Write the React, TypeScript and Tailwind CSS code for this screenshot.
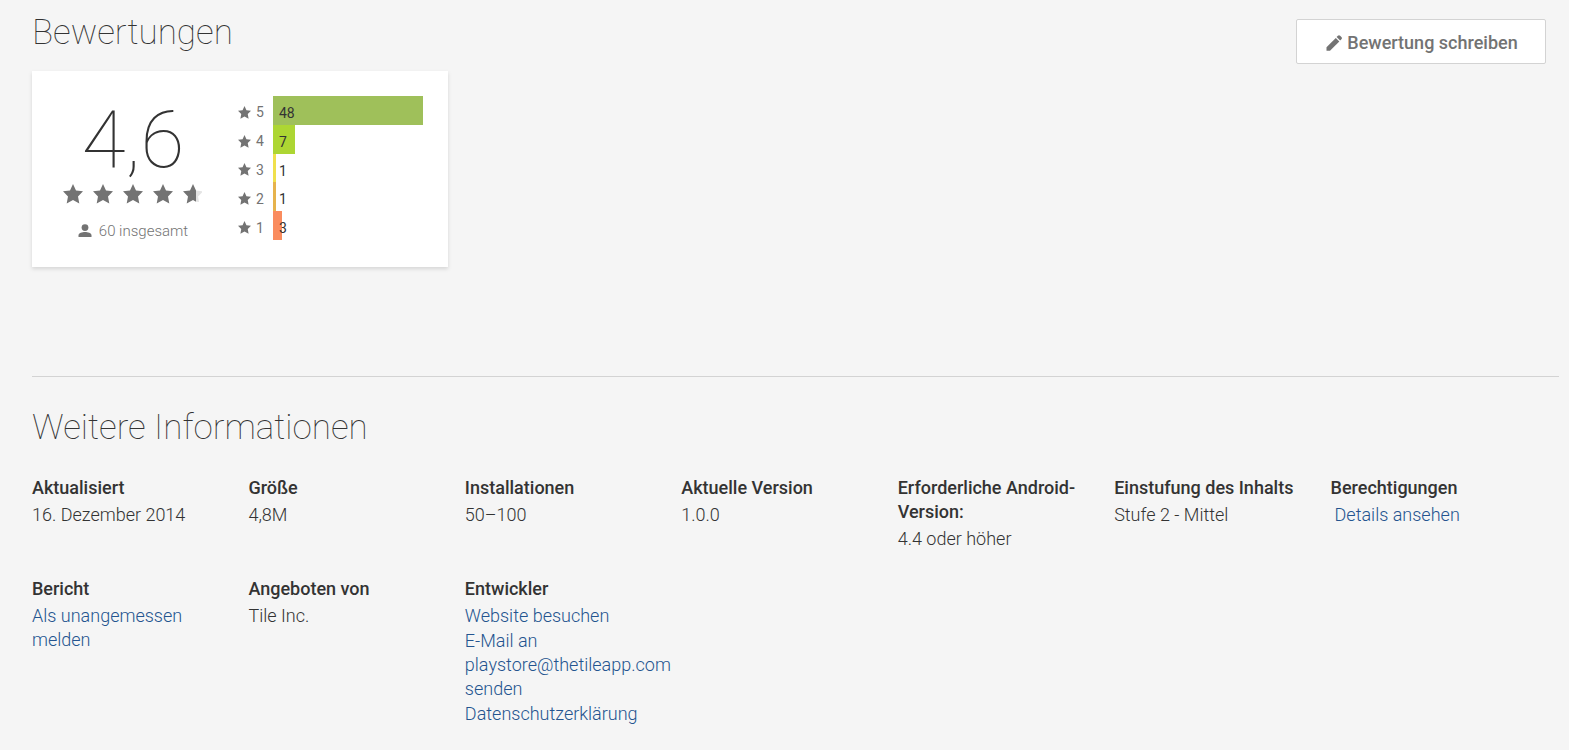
import React from "react";

const STAR_PATH =
  "M10 0L13 6.4 20 7.3 15 12.4 16.3 19.6 10 16.1 3.7 19.6 5 12.4 0 7.3 7 6.4z";

const ratings = [
  { stars: 5, count: 48, color: "bg-[#9fc05a]" },
  { stars: 4, count: 7, color: "bg-[#add633]" },
  { stars: 3, count: 1, color: "bg-[#f0e04d]" },
  { stars: 2, count: 1, color: "bg-[#e6b34d]" },
  { stars: 1, count: 3, color: "bg-[#fa8c5e]" },
];

const MAX_COUNT = 48;

const Star = ({ className }: { className: string }) => (
  <svg viewBox="0 0 20 20" className={className} fill="currentColor" aria-hidden="true">
    <path d={STAR_PATH} />
  </svg>
);

// Last star of the row, cut off on the right
const PartialStar = () => (
  <svg viewBox="0 0 20 20" className="h-5 w-5" aria-hidden="true">
    <path d="M13 6.4L19 7.2V8.4L15 12.4 16 18 13 17.8z" fill="#e4e4e4" />
    <path d="M10 0L13 6.4V17.8L10 16.1 3.7 19.6 5 12.4 0 7.3 7 6.4z" fill="#737373" />
  </svg>
);

const Score = () => (
  <div className="flex w-[152px] flex-col items-center pt-1">
    <div className="text-[80px] leading-[80px] font-thin text-[#333]">4,6</div>
    <div className="mt-1 flex gap-[10px] text-[#737373]">
      <Star className="h-5 w-5" />
      <Star className="h-5 w-5" />
      <Star className="h-5 w-5" />
      <Star className="h-5 w-5" />
      <PartialStar />
    </div>
    <div className="mt-[17px] flex items-center gap-[7px] text-[15px] leading-5 font-light text-[#737373]">
      <svg viewBox="0 0 14 14" className="h-[14px] w-[14px]" fill="currentColor" aria-hidden="true">
        <circle cx="7" cy="3.6" r="3.4" />
        <path d="M7 8c2.8 0 6.5 1 6.5 3.4V13H.5v-1.6C.5 9 4.2 8 7 8z" />
      </svg>
      60 insgesamt
    </div>
  </div>
);

const Histogram = () => (
  <div className="flex h-36 flex-1 flex-col">
    {ratings.map((r) => (
      <div key={r.stars} className="flex flex-1 text-sm">
        <div className="flex w-[35px] items-center gap-[5px] pt-1 text-[#737373]">
          <Star className="h-[13px] w-[13px]" />
          {r.stars}
        </div>
        <div className="relative flex-1">
          <div
            className={`h-full ${r.color}`}
            style={{ width: `${(r.count / MAX_COUNT) * 100}%` }}
          />
          <span className="absolute top-[7px] left-[6px] text-[#333]">{r.count}</span>
        </div>
      </div>
    ))}
  </div>
);

const InfoItem = ({ title, children }: { title: string; children: React.ReactNode }) => (
  <div className="pr-3">
    <h3 className="font-medium">{title}</h3>
    <div className="mt-[3px] flex flex-col items-start gap-px font-light">{children}</div>
  </div>
);

const InfoLink = ({ children }: { children: React.ReactNode }) => (
  <a href="#" className="text-[#24548f]">
    {children}
  </a>
);

const App = () => {
  return (
    <main className="min-h-screen bg-[#f5f5f5] pl-8 font-['Roboto',sans-serif] text-[#333]">
      {/* Reviews */}
      <section className="pt-[13px] pr-[23px]">
        <div className="flex items-start justify-between">
          <h2 className="text-[35px] leading-10 font-thin">Bewertungen</h2>
          <button className="mt-[6px] flex h-[45px] w-[250px] items-center justify-center gap-[5px] rounded-xs border border-[#d3d3d3] bg-white pt-[2px] pl-[2px] text-lg font-medium text-[#737373]">
            <svg viewBox="0 0 16 16" className="h-4 w-4" fill="currentColor" aria-hidden="true">
              <path d="M.5 12.200L9.800 2.900l3.500 3.500-9.300 9.300H.5z" />
              <path d="M10.600 2.100l1.300-1.300a1.600 1.600 0 0 1 2.200 0l1.300 1.300a1.600 1.600 0 0 1 0 2.200l-1.300 1.300z" />
            </svg>
            Bewertung schreiben
          </button>
        </div>
        <div className="mt-[7px] flex h-[196px] w-[416px] gap-[29px] bg-white px-[25px] pt-[25px] shadow-[0_2px_4px_rgba(0,0,0,0.13)]">
          <Score />
          <Histogram />
        </div>
      </section>

      {/* Additional information */}
      <section className="mt-[109px] mr-[10px] border-t border-[#d3d3d3] pt-[31px] pb-6">
        <h2 className="text-[35px] leading-10 font-thin">Weitere Informationen</h2>
        <div className="mt-7 mr-3 grid grid-cols-7 gap-y-[26px] text-lg leading-6">
          <InfoItem title="Aktualisiert">16. Dezember 2014</InfoItem>
          <InfoItem title="Größe">4,8M</InfoItem>
          <InfoItem title="Installationen">50–100</InfoItem>
          <InfoItem title="Aktuelle Version">1.0.0</InfoItem>
          <InfoItem title="Erforderliche Android-Version:">4.4 oder höher</InfoItem>
          <InfoItem title="Einstufung des Inhalts">Stufe 2 - Mittel</InfoItem>
          <InfoItem title="Berechtigungen">
            <button className="px-1 text-[#24548f]">Details ansehen</button>
          </InfoItem>
          <InfoItem title="Bericht">
            <InfoLink>Als unangemessen melden</InfoLink>
          </InfoItem>
          <InfoItem title="Angeboten von">Tile Inc.</InfoItem>
          <InfoItem title="Entwickler">
            <InfoLink>Website besuchen</InfoLink>
            <InfoLink>E-Mail an playstore@thetileapp.com senden</InfoLink>
            <InfoLink>Datenschutzerklärung</InfoLink>
          </InfoItem>
        </div>
      </section>
    </main>
  );
};

export default App;
